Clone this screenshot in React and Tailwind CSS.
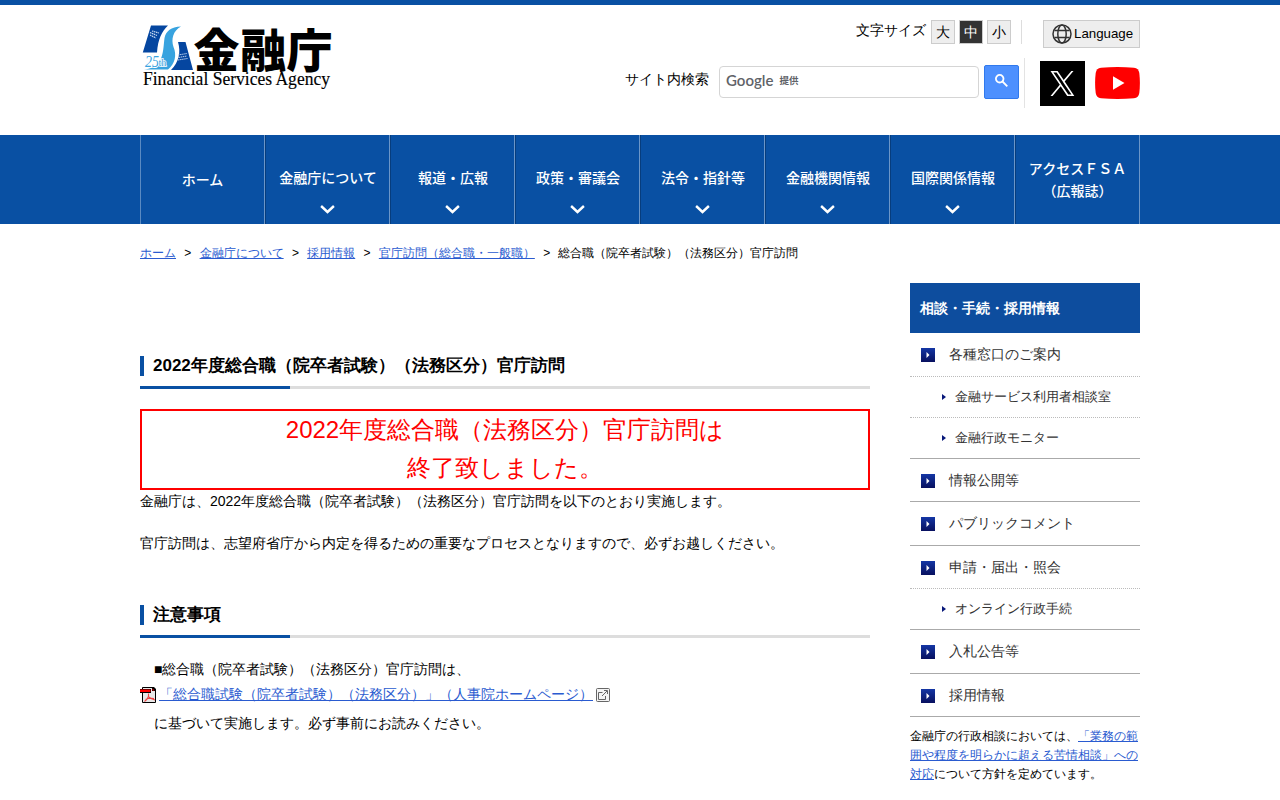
import React from "react";

const navItems = [
  { lines: ["ホーム"], arrow: false },
  { lines: ["金融庁について"], arrow: true },
  { lines: ["報道・広報"], arrow: true },
  { lines: ["政策・審議会"], arrow: true },
  { lines: ["法令・指針等"], arrow: true },
  { lines: ["金融機関情報"], arrow: true },
  { lines: ["国際関係情報"], arrow: true },
  { lines: ["アクセスＦＳＡ", "（広報誌）"], arrow: false },
];

const crumbs = ["ホーム", "金融庁について", "採用情報", "官庁訪問（総合職・一般職）"];

const sideItems = [
  { label: "各種窓口のご案内", style: "h-11 pb-0.5 border-dotted border-[#bbb]" },
  { label: "金融サービス利用者相談室", sub: true, style: "h-[41px] border-dotted border-[#bbb]" },
  { label: "金融行政モニター", sub: true, style: "h-[41px] border-[#aaa]" },
  { label: "情報公開等", style: "h-[43px] border-[#aaa]" },
  { label: "パブリックコメント", style: "h-11 pb-0.5 border-[#aaa]" },
  { label: "申請・届出・照会", style: "h-[43px] border-dotted border-[#bbb]" },
  { label: "オンライン行政手続", sub: true, style: "h-[41px] border-[#aaa]" },
  { label: "入札公告等", style: "h-11 pb-0.5 border-[#aaa]" },
  { label: "採用情報", style: "h-[43px] border-[#aaa]" },
];

const Logo = () => (
  <svg className="overflow-visible" width="194" height="70" viewBox="140 22 194 70" role="img" aria-label="金融庁">
    <path d="M151 25.500H168C162 31 158 39 157 52.500H142.800Z" fill="#0546a0" />
    <path d="M178 42H185.500L193 70H171C179 62 181 52 178 42Z" fill="#0546a0" />
    <path
      d="M181 26.500C171 27 166 31 164.500 38C163.500 46 163.500 54 160 61C157 66 150 69 144 69.500H168C175 64 177 55 173.500 47C171 39 173 31 181 26.500Z"
      fill="#38a3df"
    />
    <path d="M150 32.500L157 35.500M150 35L156 38M152 31L159 33" stroke="#cbdcf2" strokeWidth="1.200" strokeDasharray="1.500 .6" />
    <path d="M178 55L187 53.500M178.500 57.500L187 56M178 60L187.500 58.500" stroke="#bcd0ec" strokeWidth="1" strokeDasharray="1.500 .6" />
    <text x="145" y="67" fontSize="16" textLength="14" lengthAdjust="spacingAndGlyphs" fontStyle="italic" fill="#38a3df" stroke="#fff" strokeWidth="2" paintOrder="stroke" className="font-['Liberation_Serif',serif]">25</text>
    <text x="158.500" y="66" fontSize="10" fill="#38a3df" stroke="#fff" strokeWidth="1.400" paintOrder="stroke" className="font-['Liberation_Serif',serif]">th</text>
    <text x="193.500" y="66.500" fontSize="46" fontWeight="900" textLength="139" className="font-['Noto_Sans_CJK_JP',sans-serif]">金融庁</text>
    <text x="143" y="84.500" fontSize="18" textLength="187" lengthAdjust="spacingAndGlyphs" stroke="#000" strokeWidth=".15" className="font-['Liberation_Serif',serif]">Financial Services Agency</text>
  </svg>
);

const GlobeIcon = () => (
  <svg width="20" height="20" viewBox="0 0 20 20" fill="none" stroke="#333" strokeWidth="1.500">
    <circle cx="10" cy="10" r="9" />
    <ellipse cx="10" cy="10" rx="4.200" ry="9" />
    <path d="M2.500 6.500H17.500M2.500 13.500H17.500" />
  </svg>
);

const XLogo = () => (
  <svg className="block" width="45" height="45" viewBox="0 0 45 45">
    <path d="M0 0H45V45H0Z" />
    <path
      transform="translate(10.5 9.5)"
      fill="#fff"
      d="M14.200 11 23 0.500h-2.100l-7.700 9.100L7.100 0.500H0l9.300 13.800L0 25.500h2.100l8.100-9.700 6.500 9.700h7.100L14.200 11Zm-2.900 3.400-.9-1.400L2.900 2.100h3.200l6.100 9 .9 1.400 7.900 11.500h-3.200l-6.500-9.600Z"
    />
  </svg>
);

const YouTubeLogo = () => (
  <svg className="block" width="45" height="32" viewBox="0 0 45 32">
    <path d="M6 .7Q22.500-.7 39 .7Q43.600 1.200 44.300 6Q45.500 16 44.300 26Q43.600 30.800 39 31.300Q22.500 32.700 6 31.300Q1.400 30.800.7 26Q-.5 16 .7 6Q1.400 1.200 6 .7Z" fill="#f00" />
    <path d="M18 9.200L29.500 16L18 22.800Z" fill="#fff" />
  </svg>
);

const PdfIcon = () => (
  <svg className="shrink-0" width="16" height="17" viewBox="0 0 16 17">
    <path d="M2.500.5H12.500L15.500 3.500V15.500H2.500Z" fill="#e8e8e8" stroke="#000" />
    <path d="M12 0H14L16 2V4H12Z" fill="#000" />
    <path d="M12.500 1.500L14.500 3.500H12.500Z" fill="#f00" />
    <path d="M0 2H11V6H0Z" fill="#000" />
    <path d="M0 2.500H10.500V5H0Z" fill="#f00" />
    <path d="M8.500 6.500C9 9.500 8 12 4.500 14.500M8.500 9.500C10 11.500 12 12.500 15 13M5.500 12.500C8 11.300 11 11 14 11.500" fill="none" stroke="#e44" strokeWidth="1.100" />
  </svg>
);

const ExternalIcon = () => (
  <svg className="shrink-0" width="14" height="14" viewBox="0 0 14 14" fill="none" stroke="#666">
    <rect x=".5" y=".5" width="13" height="13" rx="1" fill="#f4f4f4" />
    <path d="M6.500 4.500H2.500V11.500H9.500V8M6 8L11 3M8 2.500H11.500V6" />
  </svg>
);

const SquareArrow = () => (
  <span className="flex h-3.5 w-3.5 shrink-0 items-center justify-center bg-linear-to-b from-[#1436a5] to-[#08105f]">
    <svg width="4" height="6" viewBox="0 0 4 6">
      <path d="M.5 0L3.500 3L.5 6Z" fill="#fff" />
    </svg>
  </span>
);

const SectionHeading = ({ children }) => (
  <h2 className="flex h-[43px] border-b-3 border-[#ddd] pt-2.5 text-[17px] leading-5 font-bold">
    <span className="flex h-[33px] w-[150px] border-b-3 border-[#0950a3]">
      <span className="h-5 border-l-4 border-[#0950a3] pl-[9px] whitespace-nowrap">{children}</span>
    </span>
  </h2>
);

const Header = () => (
  <header className="h-[135px] border-t-5 border-[#0950a3]">
    <div className="mx-auto flex w-[1000px] justify-between">
      <div className="pt-[17px]">
        <Logo />
      </div>
      <div className="flex flex-col items-end pt-[15px]">
        <div className="flex items-start text-sm leading-[22px]">
          <span className="mr-[5px] leading-5">文字サイズ</span>
          <div className="flex gap-1">
            <button className="h-6 w-6 border border-[#ccc] bg-[#eee]">大</button>
            <button className="h-6 w-6 border border-[#ccc] bg-[#333] text-white">中</button>
            <button className="h-6 w-6 border border-[#ccc] bg-[#eee]">小</button>
          </div>
          <span className="ml-2.5 h-6 w-px bg-[#ddd]" />
          <button className="ml-[21px] flex h-7 w-[97px] items-center gap-0.5 border border-[#ccc] bg-[#eee] pl-2 text-[13.3px]">
            <GlobeIcon />
            Language
          </button>
        </div>
        <div className="mt-2.5 flex h-[50px] items-center text-sm">
          <span className="mr-2.5 pb-2">サイト内検索</span>
          <div className="mt-[-2px] flex h-8 w-[260px] items-center rounded-[4px] border border-[#d5d5d5] pb-0.5 pl-1.5 text-[#5f6368]">
            <span className="font-['Lato',sans-serif] text-[15px] font-semibold">Google</span>
            <span className="ml-1.5 font-['Noto_Sans_CJK_JP',sans-serif] text-[9.5px] font-bold">提供</span>
          </div>
          <button className="mt-[-2px] ml-[5px] flex h-[34px] w-[35px] justify-center rounded-[2px] border border-[#3079ed] bg-[#4d90fe] pt-2">
            <svg width="13" height="13" viewBox="0 0 13 13" fill="none" stroke="#fff" strokeWidth="1.800">
              <circle cx="4.700" cy="4.700" r="3.800" />
              <path d="M7.500 7.500L12.300 12.300" />
            </svg>
          </button>
          <span className="mr-[15px] ml-[5px] h-[50px] w-px bg-[#e3e3e3]" />
          <XLogo />
          <span className="ml-2.5">
            <YouTubeLogo />
          </span>
        </div>
      </div>
    </div>
  </header>
);

const Nav = () => (
  <nav className="bg-[#0950a3] font-['Noto_Sans_CJK_JP',sans-serif] text-sm leading-[22px] font-medium text-white">
    <ul className="mx-auto flex h-[89px] w-[1000px]">
      {navItems.map((item, i) => (
        <li
          key={item.lines[0]}
          className={`flex w-[125px] flex-col items-center border-r border-r-[#6b96c8] border-l ${
            i === 0 ? "border-l-[#5a8ac2]" : "border-l-[#073d7d]"
          } ${item.arrow ? "pt-[31px]" : i === 0 ? "pt-[33px]" : "pt-[22px]"}`}
        >
          {item.lines.map((line) => (
            <span key={line} className={item.arrow ? "pl-px whitespace-nowrap" : "whitespace-nowrap"}>{line}</span>
          ))}
          {item.arrow && (
            <svg className="mt-[17px]" width="15" height="9" viewBox="0 0 15 9" fill="none" stroke="#fff" strokeWidth="2.400">
              <path d="M1.100 1L7.500 7L13.900 1" />
            </svg>
          )}
        </li>
      ))}
    </ul>
  </nav>
);

const Sidebar = () => (
  <aside className="w-[230px] pt-[19px]">
    <h2 className="h-[50px] bg-[#0d4d9e] pl-2.5 text-sm leading-[50px] font-bold text-white">
      相談・手続・採用情報
    </h2>
    <ul className="text-[#333]">
      {sideItems.map((item) => (
        <li
          key={item.label}
          className={`flex items-center border-b ${item.style} ${
            item.sub ? "pl-8 text-[13px]" : "pl-[11px] text-sm"
          }`}
        >
          {item.sub ? (
            <svg className="mr-[9px]" width="4" height="6" viewBox="0 0 4 6">
              <path d="M0 0L4 3L0 6Z" fill="#08187a" />
            </svg>
          ) : (
            <span className="mr-3.5 pt-0.5">
              <SquareArrow />
            </span>
          )}
          {item.label}
        </li>
      ))}
    </ul>
    <p className="mt-2.5 text-xs leading-[19.2px]">
      金融庁の行政相談においては、
      <a href="#" className="text-[#2a5bd0] underline">「業務の範囲や程度を明らかに超える苦情相談」への対応</a>
      について方針を定めています。
    </p>
  </aside>
);

export default function App() {
  return (
    <div lang="ja" className="h-[800px] overflow-hidden bg-white font-['Liberation_Sans',sans-serif] text-black">
      <Header />
      <Nav />
      <div className="mx-auto w-[1000px]">
        <div className="flex h-10 items-center gap-[8.3px] pt-[18px] text-xs">
          {crumbs.map((c) => (
            <React.Fragment key={c}>
              <a href="#" className="text-[#2a5bd0] underline">{c}</a>
              <span>&gt;</span>
            </React.Fragment>
          ))}
          <span>総合職（院卒者試験）（法務区分）官庁訪問</span>
        </div>
        <div className="flex justify-between">
          <main className="w-[730px] pt-[82px] text-sm leading-[22px]">
            <SectionHeading>2022年度総合職（院卒者試験）（法務区分）官庁訪問</SectionHeading>
            <p className="mt-5 h-[81px] border-2 border-[#f00] text-center text-2xl leading-[38.4px] text-[#f00]">
              2022年度総合職（法務区分）官庁訪問は
              <br />
              終了致しました。
            </p>
            <p>金融庁は、2022年度総合職（院卒者試験）（法務区分）官庁訪問を以下のとおり実施します。</p>
            <p className="mt-5 mb-[41px]">官庁訪問は、志望府省庁から内定を得るための重要なプロセスとなりますので、必ずお越しください。</p>
            <SectionHeading>注意事項</SectionHeading>
            <p className="mt-5 pl-3.5">■総合職（院卒者試験）（法務区分）官庁訪問は、</p>
            <p className="mt-1 flex h-[22px] items-center gap-[3px]">
              <PdfIcon />
              <a href="#" className="pb-0.5 text-[#2a5bd0] underline">「総合職試験（院卒者試験）（法務区分）」（人事院ホームページ）</a>
              <ExternalIcon />
            </p>
            <p className="mt-1.5 pl-3.5">に基づいて実施します。必ず事前にお読みください。</p>
          </main>
          <Sidebar />
        </div>
      </div>
    </div>
  );
}
